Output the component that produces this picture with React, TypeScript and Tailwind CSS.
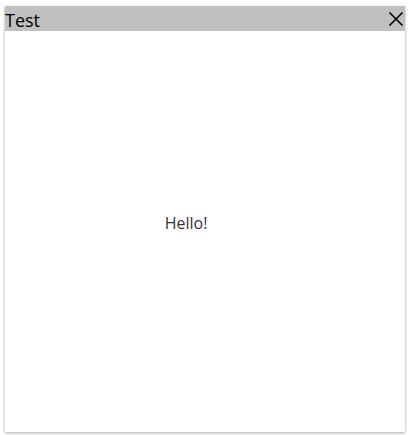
import React from "react";

export default function App() {
  return (
    <div className="w-[410px] h-[435px] bg-white pt-[6px] pl-[5px]" style={{ fontFamily: '"Open Sans", "Noto Sans", sans-serif' }}>
      <div className="w-[400px] h-[426px] bg-white flex flex-col shadow-[0_1px_3px_rgba(0,0,0,0.35)]">
        <div className="h-[25px] bg-[#c0c0c0] flex items-center justify-between">
          <span className="text-[18px] leading-[25px] text-black pt-[3px]">Test</span>
          <svg width="16" height="16" viewBox="0 0 16 16" className="mr-[1px]">
            <path d="M1.5 1.5 L14.5 14.5 M14.5 1.5 L1.5 14.5" stroke="black" strokeWidth="1.6" />
          </svg>
        </div>
        <div className="flex-1 flex items-center justify-center pr-[38px] pb-[17px]">
          <span className="text-[16px] text-[#333]">Hello!</span>
        </div>
      </div>
    </div>
  );
}
